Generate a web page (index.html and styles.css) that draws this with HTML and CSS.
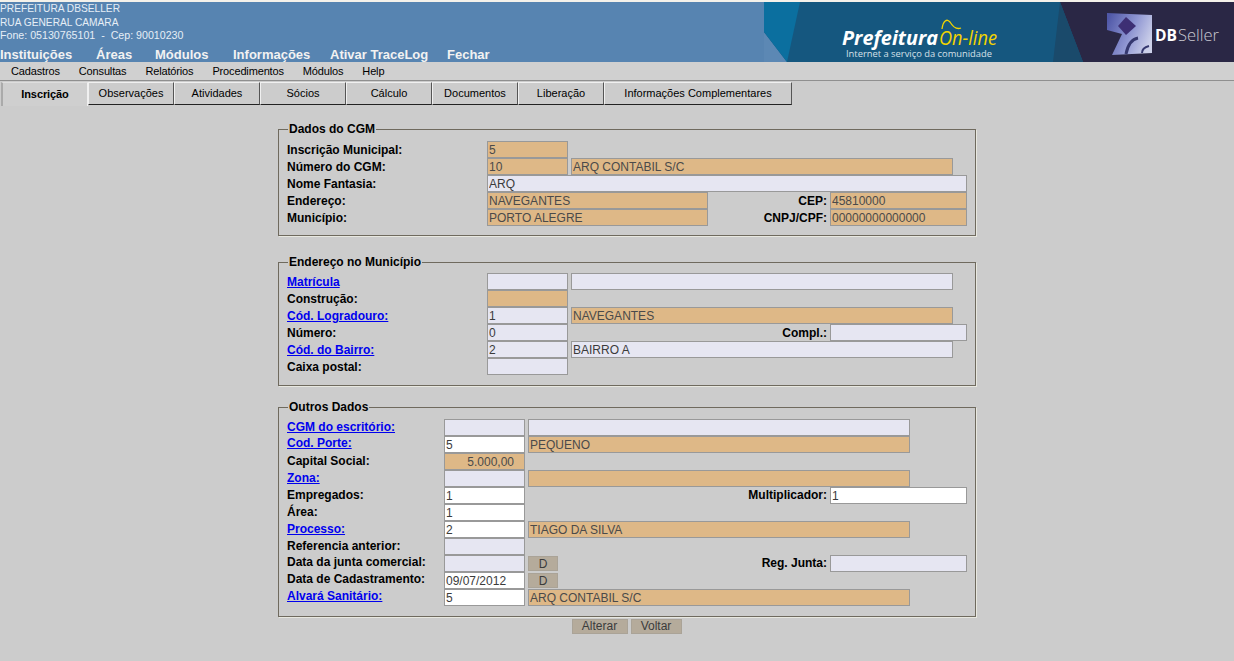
FILE: index.html
```html
<!DOCTYPE html>
<html lang="pt-BR">
<head>
    <meta charset="UTF-8">
    <title>Inscrição</title>
    <link rel="stylesheet" href="styles.css">
</head>
<body>

    <!-- Topo com dados da prefeitura e banner -->
    <div class="topo">
        <div class="topo-info">
            <div class="dados">
                PREFEITURA DBSELLER<br>
                RUA GENERAL CAMARA<br>
                <span class="fone">Fone: 05130765101 &nbsp;-&nbsp; Cep: 90010230</span>
            </div>
            <div class="menu-principal">
                <a class="m1">Instituições</a>
                <a class="m2">Áreas</a>
                <a class="m3">Módulos</a>
                <a class="m4">Informações</a>
                <a class="m5">Ativar TraceLog</a>
                <a>Fechar</a>
            </div>
        </div>
        <svg class="banner" width="470" height="60" viewBox="0 0 470 60">
            <defs>
                <linearGradient id="cubo" x1="0" y1="0.2" x2="1" y2="0.6">
                    <stop offset="0" stop-color="#5058a8"/>
                    <stop offset="0.55" stop-color="#8f96d2"/>
                    <stop offset="1" stop-color="#cdd1ea"/>
                </linearGradient>
            </defs>
            <rect width="470" height="60" fill="#15577f"/>
            <polygon points="0,30 23,60 0,60" fill="#5c88b4"/>
            <polygon points="0,0 36,0 23,60 0,30" fill="#0b6f9f"/>
            <polygon points="296,0 470,0 470,60 319,60" fill="#2a2745"/>
            <polygon points="296,0 319,60 289,60" fill="#1a4a6b"/>
            <text class="bn-pref" x="78" y="43" textLength="96" lengthAdjust="spacingAndGlyphs">Prefeitura</text>
            <text class="bn-on" x="175" y="43" textLength="58" lengthAdjust="spacingAndGlyphs">On-line</text>
            <path d="M178 27 C179 19 183 16 186 20 C189 25 192 28 197 26" fill="none" stroke="#f2d400" stroke-width="1.3"/>
            <text class="bn-sub" x="82" y="55" textLength="146" lengthAdjust="spacingAndGlyphs">Internet a serviço da comunidade</text>
            <polygon points="343,11 388,13 388,51 348,53 358,32 343,28" fill="url(#cubo)"/>
            <polygon points="362,15 372,24 362,33 354,24" fill="#3d2f74"/>
            <path d="M362 52 C364 42 368 37 374 36" fill="none" stroke="#35386f" stroke-width="3"/>
            <path d="M378 51 C378 47 381 45 385 44" fill="none" stroke="#35386f" stroke-width="2"/>
            <text class="bn-db" x="391" y="39" textLength="22" lengthAdjust="spacingAndGlyphs">DB</text>
            <text class="bn-seller" x="414" y="39" textLength="41" lengthAdjust="spacingAndGlyphs">Seller</text>
        </svg>
    </div>

    <!-- Menu de cadastros -->
    <div class="submenu">
        <a>Cadastros</a>
        <a>Consultas</a>
        <a>Relatórios</a>
        <a>Procedimentos</a>
        <a>Módulos</a>
        <a>Help</a>
    </div>

    <!-- Abas -->
    <div class="abas">
        <div class="aba ativa">Inscrição</div>
        <div class="aba">Observações</div>
        <div class="aba">Atividades</div>
        <div class="aba">Sócios</div>
        <div class="aba">Cálculo</div>
        <div class="aba">Documentos</div>
        <div class="aba">Liberação</div>
        <div class="aba larga">Informações Complementares</div>
    </div>

    <form class="conteudo">
        <fieldset class="grupo g1">
            <legend>Dados do CGM</legend>
            <div class="linha"><label>Inscrição Municipal:</label><input class="cod ro" value="5"></div>
            <div class="linha"><label>Número do CGM:</label><input class="cod ro" value="10"><input class="desc ro" value="ARQ CONTABIL S/C"></div>
            <div class="linha"><label>Nome Fantasia:</label><input class="total" value="ARQ"></div>
            <div class="linha"><label>Endereço:</label><input class="meio ro" value="NAVEGANTES"><label class="dir">CEP:</label><input class="ext ro" value="45810000"></div>
            <div class="linha"><label>Município:</label><input class="meio ro" value="PORTO ALEGRE"><label class="dir">CNPJ/CPF:</label><input class="ext ro" value="00000000000000"></div>
        </fieldset>

        <fieldset class="grupo g2">
            <legend>Endereço no Município</legend>
            <div class="linha"><label><a href="#">Matrícula</a></label><input class="cod"><input class="desc"></div>
            <div class="linha"><label>Construção:</label><input class="cod ro"></div>
            <div class="linha"><label><a href="#">Cód. Logradouro:</a></label><input class="cod" value="1"><input class="desc ro" value="NAVEGANTES"></div>
            <div class="linha"><label>Número:</label><input class="cod" value="0"><label class="dir">Compl.:</label><input class="ext"></div>
            <div class="linha"><label><a href="#">Cód. do Bairro:</a></label><input class="cod" value="2"><input class="desc" value="BAIRRO A"></div>
            <div class="linha"><label>Caixa postal:</label><input class="cod"></div>
        </fieldset>

        <fieldset class="grupo g3">
            <legend>Outros Dados</legend>
            <div class="linha"><label><a href="#">CGM do escritório:</a></label><input class="cod"><input class="desc"></div>
            <div class="linha"><label class="cima"><a href="#">Cod. Porte:</a></label><input class="cod br" value="5"><input class="desc ro" value="PEQUENO"></div>
            <div class="linha"><label>Capital Social:</label><input class="cod ro num" value="5.000,00"></div>
            <div class="linha"><label><a href="#">Zona:</a></label><input class="cod"><input class="desc ro"></div>
            <div class="linha"><label>Empregados:</label><input class="cod br" value="1"><label class="dir">Multiplicador:</label><input class="ext br" value="1"></div>
            <div class="linha"><label>Área:</label><input class="cod br" value="1"></div>
            <div class="linha"><label><a href="#">Processo:</a></label><input class="cod br" value="2"><input class="desc ro" value="TIAGO DA SILVA"></div>
            <div class="linha"><label>Referencia anterior:</label><input class="cod"></div>
            <div class="linha"><label class="sobe">Data da junta comercial:</label><input class="cod"><button type="button" class="btn-d">D</button><label class="dir">Reg. Junta:</label><input class="ext"></div>
            <div class="linha"><label class="sobe">Data de Cadastramento:</label><input class="cod br" value="09/07/2012"><button type="button" class="btn-d">D</button></div>
            <div class="linha"><label class="sobe"><a href="#">Alvará Sanitário:</a></label><input class="cod br" value="5"><input class="desc ro" value="ARQ CONTABIL S/C"></div>
        </fieldset>

        <div class="botoes">
            <button type="button" class="btn">Alterar</button>
            <button type="button" class="btn">Voltar</button>
        </div>
    </form>

</body>
</html>
```

FILE: styles.css
```css
html, body {
    margin: 0;
    height: 661px;
    overflow: hidden;
}

body {
    font-family: "Liberation Sans", Arial, sans-serif;
    font-size: 12px;
    color: #000;
    background-color: #cccccc;
    border-top: 2px solid #f4f1ea;
    box-sizing: border-box;
}

/* Topo */
.topo {
    display: flex;
    height: 60px;
    background-color: #5784b1;
}

.topo-info {
    flex: 1;
    color: #fff;
    display: flex;
    flex-direction: column;
}

.dados {
    font-size: 10.2px;
    line-height: 13.5px;
    color: #e6eef6;
}

.fone {
    font-size: 10.65px;
}

.menu-principal {
    display: flex;
    margin-top: 4px;
    font-size: 13px;
    font-weight: bold;
    line-height: 16px;
    color: #f2f2f2;
}

.menu-principal .m1 { width: 96px; }
.menu-principal .m2 { width: 59px; }
.menu-principal .m3 { width: 78px; }
.menu-principal .m4 { width: 97px; }
.menu-principal .m5 { width: 117px; }

.banner {
    display: block;
    flex: none;
}

.bn-pref {
    font-family: "Open Sans", sans-serif;
    font-size: 19px;
    font-weight: 700;
    font-style: italic;
    fill: #fff;
}

.bn-on {
    font-family: "Open Sans", sans-serif;
    font-size: 20px;
    font-style: italic;
    fill: #f2d400;
}

.bn-sub {
    font-family: "Open Sans", sans-serif;
    font-size: 9.5px;
    fill: #d5e0e8;
}

.bn-db {
    font-family: "Open Sans", sans-serif;
    font-size: 16px;
    font-weight: 700;
    fill: #fff;
}

.bn-seller {
    font-family: "Open Sans", sans-serif;
    font-size: 16px;
    font-weight: 300;
    fill: #c9c9d2;
}

/* Menu de cadastros */
.submenu {
    display: flex;
    gap: 19px;
    height: 18px;
    padding-left: 11px;
    background-color: #d0d0d0;
    border-bottom: 1px solid #8f8f8f;
    font-size: 11px;
    letter-spacing: -0.15px;
    line-height: 18px;
}

/* Abas */
.abas {
    display: flex;
    height: 24px;
    padding: 1px 0 0 1px;
    font-size: 11px;
}

.aba {
    width: 84px;
    height: 21px;
    border-top: 1px solid #f0f0f0;
    border-left: 1px solid #f0f0f0;
    border-right: 1px solid #555;
    border-bottom: 1px solid #222;
    line-height: 21px;
    text-align: center;
}

.aba.ativa {
    width: 87px;
    height: 24px;
    box-sizing: border-box;
    background-color: #cfcfcf;
    font-weight: bold;
    letter-spacing: -0.1px;
    border-top-color: #dedede;
    border-left: 2px solid #aaa;
    border-bottom: none;
    border-right: 1px solid #f0f0f0;
    line-height: 23px;
}

.aba.larga {
    width: 186px;
}

/* Formulario */
.conteudo {
    width: 698px;
    margin-left: 278px;
}

.grupo {
    margin: 0;
    padding: 5px 8px 9px 8px;
    border: 1px solid #6f6a5e;
    box-shadow: 1px 1px 0 #e8e8e0;
    min-width: 0;
}

.g1 { margin-top: 16px; }
.g2 { margin-top: 19px; padding-top: 4px; padding-bottom: 10px; }
.g3 { margin-top: 14px; padding-bottom: 10px; }

legend {
    font-weight: bold;
    padding: 0 1px;
    margin-left: 1px;
    line-height: 14px;
    color: #000;
}

.linha {
    display: flex;
    align-items: flex-start;
    height: 17px;
}

.linha label {
    width: 200px;
    flex: none;
    font-weight: bold;
    line-height: 19px;
}

.g3 .linha label {
    width: 157px;
    line-height: 17px;
}

.g3 .linha label.cima {
    line-height: 15px;
}

.g3 .linha label.sobe {
    line-height: 14px;
}

.linha label.dir,
.g3 .linha label.dir {
    flex: 1;
    width: auto;
    text-align: right;
    padding-right: 3px;
}

.linha a {
    color: #0000ee;
}

input {
    box-sizing: border-box;
    height: 17px;
    margin: 0;
    padding: 0 1px;
    border: 1px solid #999;
    background-color: #e6e6f2;
    font-family: "Liberation Sans", Arial, sans-serif;
    font-size: 12px;
    color: #3b3b3b;
    flex: none;
}

.cod { width: 81px; }
.desc { width: 382px; margin-left: 3px; }
.total { width: 480px; }
.meio { width: 221px; }
.ext { width: 137px; }

input.ro { background-color: #deb887; color: #4a4a4a; }
input.br { background-color: #fff; }
input.num { text-align: right; padding-right: 10px; }

.btn-d {
    width: 30px;
    height: 15px;
    margin: 1px 0 0 3px;
    padding: 0;
    border: 1px solid #aaa397;
    background-color: #b5ab9b;
    font-family: "Liberation Sans", Arial, sans-serif;
    font-size: 12px;
    color: #3b3b3b;
    flex: none;
}

.botoes {
    display: flex;
    justify-content: center;
    gap: 3px;
    padding-top: 2px;
    padding-right: 1px;
}

.btn {
    width: 56px;
    height: 15px;
    padding: 0;
    border: 1px solid #aaa397;
    background-color: #b5ab9b;
    font-family: "Liberation Sans", Arial, sans-serif;
    font-size: 12px;
    line-height: 13px;
    color: #3b3b3b;
}

.btn + .btn { width: 51px; }
```
